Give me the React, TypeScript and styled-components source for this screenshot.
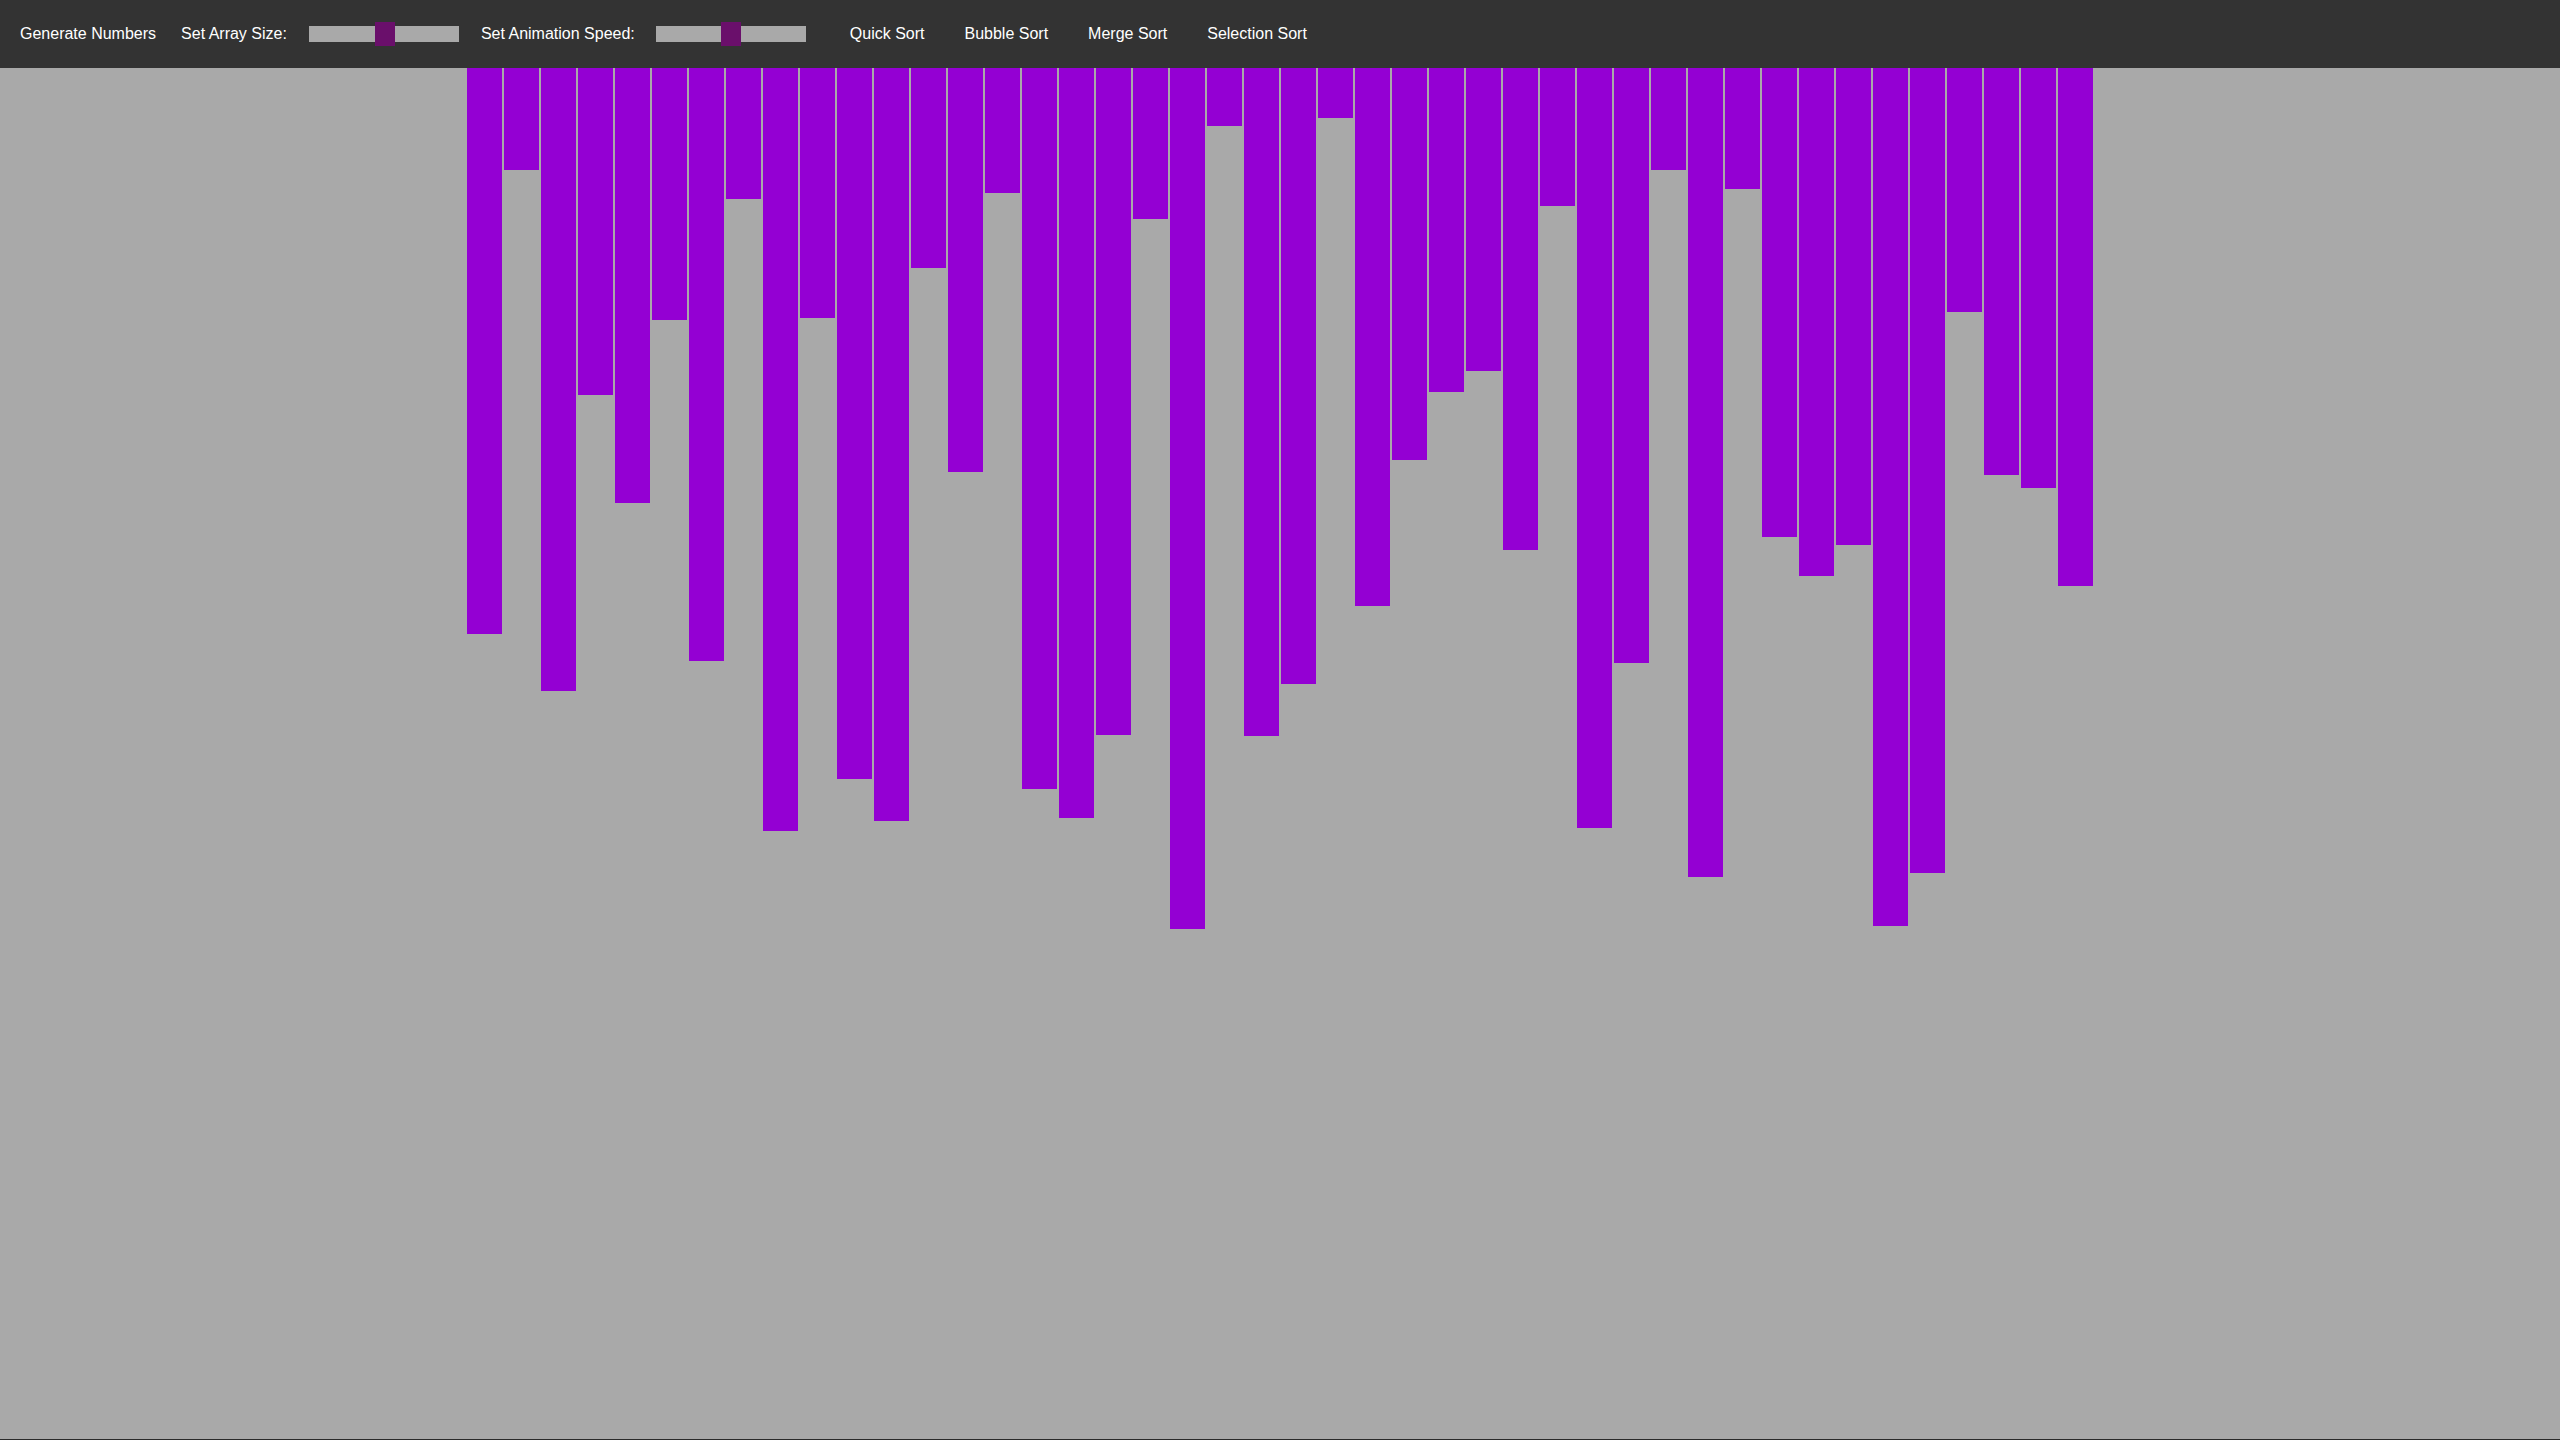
import React from "react";
import styled, { createGlobalStyle } from "styled-components";

const GlobalStyle = createGlobalStyle`
  html, body {
    margin: 0;
    padding: 0;
    background: #2b2b2b;
    font-family: "Liberation Sans", Arial, sans-serif;
  }
  #root {
    min-height: 100vh;
  }
`;

const Page = styled.div`
  display: flex;
  flex-direction: column;
  height: 1439px;
  background: #a9a9a9;
`;

const Toolbar = styled.nav`
  display: flex;
  align-items: center;
  height: 68px;
  flex-shrink: 0;
  background: #333333;
  padding-left: 8px;
`;

const NavButton = styled.button<{ $ml?: number }>`
  background: transparent;
  border: none;
  color: #ffffff;
  font-family: "Liberation Sans", Arial, sans-serif;
  font-size: 16px;
  line-height: 20px;
  padding: 0 12px;
  margin-left: ${(p) => p.$ml ?? 0}px;
  cursor: pointer;
  white-space: nowrap;
`;

const SortButton = styled(NavButton)`
  padding: 0 20px;
`;

const Label = styled.span<{ $ml: number; $mr: number }>`
  color: #ffffff;
  font-size: 16px;
  line-height: 20px;
  margin-left: ${(p) => p.$ml}px;
  margin-right: ${(p) => p.$mr}px;
  white-space: nowrap;
`;

const Slider = styled.input.attrs({ type: "range" })`
  -webkit-appearance: none;
  appearance: none;
  width: 150px;
  height: 16px;
  margin: 0;
  padding: 0;
  background: #a9a9a9;
  outline: none;
  border: none;

  &::-webkit-slider-runnable-track {
    height: 16px;
    background: #a9a9a9;
    border: none;
  }
  &::-webkit-slider-thumb {
    -webkit-appearance: none;
    appearance: none;
    width: 20px;
    height: 24px;
    margin-top: -4px;
    background: #6a0f6b;
    border: none;
    border-radius: 0;
    cursor: pointer;
  }
  &::-moz-range-thumb {
    width: 20px;
    height: 24px;
    background: #6a0f6b;
    border: none;
    border-radius: 0;
  }
`;

const Chart = styled.main`
  flex: 1;
  display: flex;
  justify-content: center;
  align-items: flex-start;
  gap: 2px;
  overflow: hidden;
`;

const Bar = styled.div`
  width: 35px;
  flex-shrink: 0;
  background: #9400d3;
`;

const heights = [
  566, 102, 623, 327, 435, 252, 593, 131, 763, 250, 711, 753, 200, 404, 125,
  721, 750, 667, 151, 861, 58, 668, 616, 50, 538, 392, 324, 303, 482, 138, 760,
  595, 102, 809, 121, 469, 508, 477, 858, 805, 244, 407, 420, 518,
];

export default function App() {
  return (
    <>
      <GlobalStyle />
      <Page>
        <Toolbar>
          <NavButton>Generate Numbers</NavButton>
          <Label $ml={13} $mr={22}>
            Set Array Size:
          </Label>
          <Slider min={5} max={100} defaultValue={52.5} />
          <Label $ml={22} $mr={21}>
            Set Animation Speed:
          </Label>
          <Slider min={0} max={100} defaultValue={50} />
          <SortButton $ml={24}>Quick Sort</SortButton>
          <SortButton>Bubble Sort</SortButton>
          <SortButton>Merge Sort</SortButton>
          <SortButton>Selection Sort</SortButton>
        </Toolbar>
        <Chart>
          {heights.map((h, i) => (
            <Bar key={i} style={{ height: `${h}px` }} />
          ))}
        </Chart>
      </Page>
    </>
  );
}
